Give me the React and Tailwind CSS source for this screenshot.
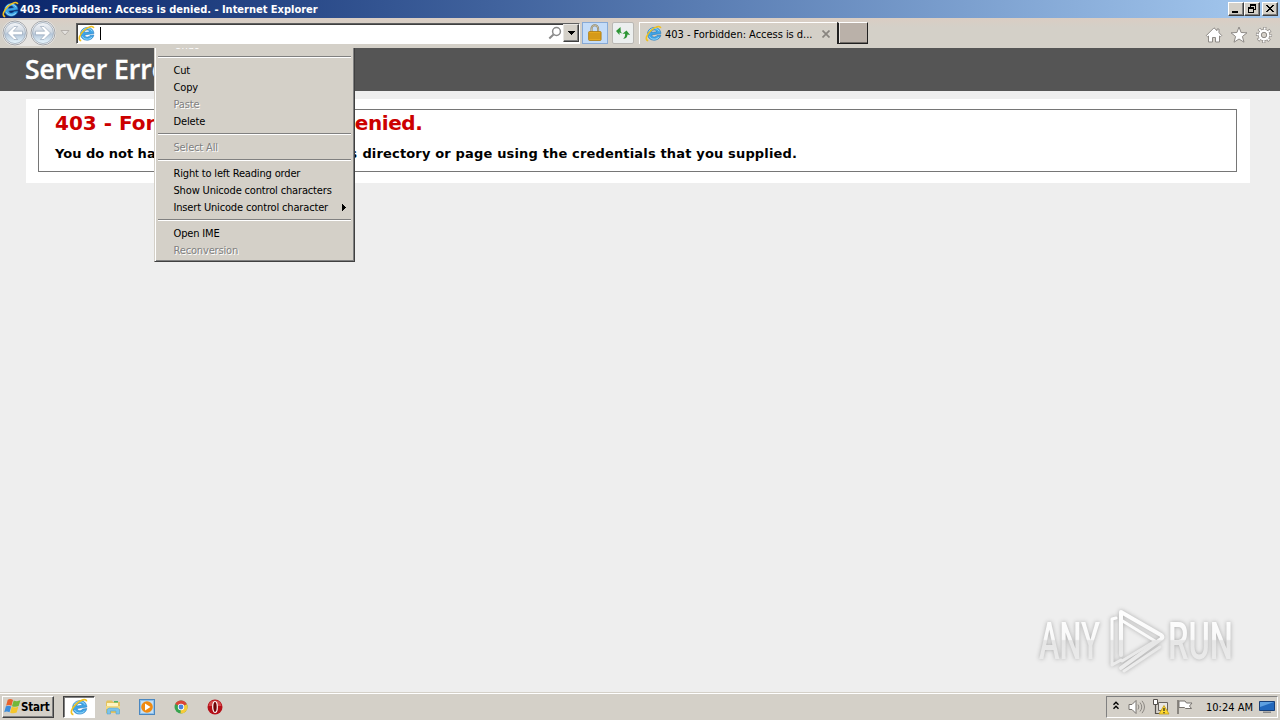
import React from "react";

const ui = "font-['DejaVu_Sans_Condensed','DejaVu_Sans',sans-serif] [font-stretch:condensed]";
const verdana = "font-['DejaVu_Sans',sans-serif]";

function IE({ className }) {
  return (
    <svg viewBox="0 0 18 18" className={className}>
      <path transform="rotate(-8 9 9)" d="M16.800 10.200H6.900c.2 1.700 1.300 2.600 2.900 2.600 1.200 0 2-.4 2.500-1.200h4.200c-.9 2.900-3.400 4.600-6.700 4.600-4.300 0-7.200-2.700-7.200-6.700s3-6.800 7.200-6.800c4.500 0 7.200 2.900 7 7.500zM12.500 7.700C12.300 6.300 11.300 5.500 9.800 5.500S7.200 6.300 6.900 7.700z" fill="#3fa4e6" stroke="#1a72b8" strokeWidth=".5" />
      <path d="M4 7.200C5 4.600 7.200 3.700 9.800 3.700c2.500 0 4.400 1 5.200 3M4.500 12c1.200 2.200 3 3 5.300 3 2.200 0 3.800-.8 4.900-2.300" fill="none" stroke="#9fdefc" strokeWidth="1" />
      <path d="M3.400 16.600C-.5 15.800 1.600 10.200 6.300 5.800c4.300-4 9.800-5.800 10.300-2.500" fill="none" stroke="#f0c020" strokeWidth="1.700" />
    </svg>
  );
}

function NavButton({ flip }) {
  return (
    <svg viewBox="0 0 26 26" className={flip ? "h-[26px] w-[26px] shrink-0 -scale-x-100" : "h-[26px] w-[26px] shrink-0"}>
      <defs>
        <linearGradient id="nav" x1="0" y1="0" x2="0" y2="1">
          <stop offset="0" stopColor="#f4f6f9" />
          <stop offset=".45" stopColor="#cfd8e2" />
          <stop offset=".55" stopColor="#b4c5d8" />
          <stop offset="1" stopColor="#e9f8ff" />
        </linearGradient>
      </defs>
      <circle cx="13" cy="13" r="12" fill="#f3f5f7" stroke="#a4a6aa" />
      <circle cx="13" cy="13" r="10.500" fill="url(#nav)" stroke="#9aa8b8" strokeWidth=".8" />
      <path d="M5.500 13l6.500-6.500h3.600L11.300 11.200H20.500v3.600h-9.200l4.300 4.700H12z" fill="#fff" stroke="#8fa0b3" strokeWidth=".6" />
    </svg>
  );
}

function WinButton({ children, className = "" }) {
  return (
    <div className={"flex h-[14px] w-4 items-center justify-center border border-t-white border-l-white border-r-[#404040] border-b-[#404040] bg-[#d4d0c8] shadow-[inset_-1px_-1px_0_#808080] " + className}>
      <svg viewBox="0 0 12 10" className="h-[10px] w-3 shrink-0" shapeRendering="crispEdges">{children}</svg>
    </div>
  );
}

function TitleBar() {
  return (
    <div className="flex h-[18px] shrink-0 items-center bg-linear-to-r from-[#0a246a] to-[#a6caf0] pl-[2px] pr-[2px]">
      <IE className="h-[17px] w-[17px] shrink-0" />
      <span className={ui + " mt-[1px] ml-[1px] text-[11px] leading-[14px] font-bold whitespace-nowrap text-white tracking-[-0.01px]"}>
        403 - Forbidden: Access is denied. - Internet Explorer
      </span>
      <div className="ml-auto flex">
        <WinButton><path d="M2 7h6v2H2z" /></WinButton>
        <WinButton>
          <path d="M4 0h6v6H8V5h1V2H5v1H4zM2 3h6v6H2zM3 5v3h4V5z" fillRule="evenodd" />
        </WinButton>
        <WinButton className="ml-[2px]">
          <path d="M2 1h2v1h1v1h2V2h1V1h2v1H9v1H8v1H7v1h1v1h1v1h1v1H8V7H7V6H5v1H4v1H2V7h1V6h1V5h1V4H4V3H3V2H2z" />
        </WinButton>
      </div>
    </div>
  );
}

function Toolbar() {
  return (
    <div className="flex h-[30px] shrink-0 items-center bg-linear-to-b from-[#dacdc3] to-[#d4d0c8] to-30% pl-[2px]">
      <div className="flex h-[26px] gap-[2px] rounded-full bg-[#e6e4e1]">
        <NavButton />
        <NavButton flip />
      </div>
      <svg viewBox="0 0 10 8" className="ml-[4px] h-2 w-[10px] shrink-0">
        <path d="M1 1.500h8L5 6z" fill="#e4e2df" stroke="#aaa59f" strokeWidth=".8" />
      </svg>
      <div className="ml-[6px] flex h-[21px] w-[504px] shrink-0 items-center border border-t-[#606060] border-l-[#606060] border-r-white border-b-white bg-white pl-[1px] shadow-[inset_1px_1px_0_#404040]">
        <IE className="h-[17px] w-[17px] shrink-0" />
        <div className="ml-[5px] h-[13px] w-px bg-black" />
        <svg viewBox="0 0 14 14" className="ml-auto h-[14px] w-[14px] shrink-0">
          <circle cx="8.500" cy="5.500" r="3.900" fill="none" stroke="#8a8a8a" strokeWidth="1.500" />
          <path d="M5.500 8.500L1.300 12.500" stroke="#8a8a8a" strokeWidth="2" />
        </svg>
        <div className="ml-[1px] flex h-[18px] w-4 items-center justify-center border border-t-[#e8e6e2] border-l-[#e8e6e2] border-r-[#404040] border-b-[#404040] bg-[#d4d0c8] shadow-[inset_-1px_-1px_0_#808080]">
          <svg viewBox="0 0 7 4" className="h-1 w-[7px]" shapeRendering="crispEdges"><path d="M0 0h7v1H6v1H5v1H4v1H3V3H2V2H1V1H0z" /></svg>
        </div>
      </div>
      <div className="ml-[2px] flex h-[22px] w-[26px] shrink-0 items-center justify-center border border-[#88aad6] bg-[#c4dcf8]">
        <svg viewBox="0 0 14 18" className="h-[18px] w-[14px]">
          <path d="M3.500 8V4.500a3.300 3.300 0 0 1 6.600 0V8" fill="none" stroke="#8c8062" strokeWidth="2" />
          <path d="M3.500 8V4.500a3.300 3.300 0 0 1 6.600 0V8" fill="none" stroke="#ddd4b8" strokeWidth=".7" />
          <rect x=".6" y="7.500" width="12.500" height="9" rx="1" fill="#e6a91f" stroke="#a87812" strokeWidth=".8" />
          <path d="M1 10h12M1 12h12M1 14h12" stroke="#b87f10" strokeWidth=".7" />
        </svg>
      </div>
      <div className="ml-1 flex h-[22px] w-[22px] shrink-0 items-center justify-center rounded-[2px] border border-[#bab8b4] bg-[#ecefef]">
        <svg viewBox="0 0 16 16" className="h-4 w-4">
          <path d="M5.500 2L1 6l3.500 4V7.300C5.500 8.300 6.500 8.500 7.500 8.300C6 7.500 5.500 6.500 5.700 5z" fill="#2e9636" />
          <path d="M11.500 5.500L7.500 8.700h2.600c.1 2.300-.5 3.900-2 5c2.800 0 4.300-1.600 4.400-4.300l2.600.6z" fill="#2e9636" />
        </svg>
      </div>
      <div className="ml-[5px] flex h-[22px] w-[198px] shrink-0 items-center border-t border-l border-white pl-[5px]">
        <IE className="h-[17px] w-[17px] shrink-0" />
        <span className={ui + " mt-[2px] ml-[3px] w-[149px] text-[11px] leading-[14px] whitespace-nowrap text-black tracking-[-0.03px]"}>
          403 - Forbidden: Access is d...
        </span>
        <svg viewBox="0 0 8 8" className="mt-[1px] ml-[8px] h-2 w-2 shrink-0"><path d="M.5.5l7 7M7.500.5l-7 7" stroke="#88847f" strokeWidth="1.700" /></svg>
      </div>
      <div className="h-[22px] w-[31px] shrink-0 border-r border-b border-l-2 border-t border-[#202020] border-t-white bg-[#bab1a9] shadow-[inset_1px_0_0_#e8e4e0,inset_0_-1px_0_#706b66]" />
      <div className="mr-[7px] ml-auto flex items-center gap-[7px] pt-[3px]">
        <svg viewBox="0 0 18 18" className="h-[18px] w-[18px]">
          <path d="M9 1.800L12 4.700V3h2v3.700l2.700 2.800-1.200 1.200L14.500 10v6h-4v-4.500h-3V16h-4v-6l-1 .7L1.300 9.500z" fill="#fff" stroke="#8e8a86" strokeWidth="1" />
        </svg>
        <svg viewBox="0 0 18 18" className="h-[18px] w-[18px]">
          <path d="M9 1l2.100 5.500 5.900.3-4.600 3.700 1.600 5.700L9 13l-5 3.200 1.600-5.700L1 6.800l5.900-.3z" fill="#fff" stroke="#8e8a86" strokeWidth="1" />
        </svg>
        <svg viewBox="0 0 18 18" className="h-[18px] w-[18px]">
          <circle cx="9" cy="9" r="6.400" fill="none" stroke="#8e8a86" strokeWidth="3.400" strokeDasharray="2.900 2.126" strokeDashoffset="1.450" />
          <circle cx="9" cy="9" r="5.800" fill="#fff" stroke="#8e8a86" strokeWidth=".8" />
          <circle cx="9" cy="9" r="6.400" fill="none" stroke="#fff" strokeWidth="2.200" strokeDasharray="1.700 3.326" strokeDashoffset=".85" />
          <circle cx="9" cy="9" r="2.700" fill="#d4d0c8" stroke="#8e8a86" />
        </svg>
      </div>
    </div>
  );
}

const menuItems = [
  { label: "Undo", off: true },
  null,
  { label: "Cut" },
  { label: "Copy" },
  { label: "Paste", off: true },
  { label: "Delete" },
  null,
  { label: "Select All", off: true },
  null,
  { label: "Right to left Reading order" },
  { label: "Show Unicode control characters" },
  { label: "Insert Unicode control character", sub: true },
  null,
  { label: "Open IME" },
  { label: "Reconversion", off: true },
];

function ContextMenu() {
  return (
    <div className="absolute top-0 left-[154px] flex h-[214px] w-[201px] flex-col justify-end overflow-hidden border-r border-b border-l border-r-[#404040] border-b-[#404040] border-l-[#d4d0c8] bg-[#d4d0c8] shadow-[inset_1px_0_0_#fff,inset_-1px_-1px_0_#808080]">
      <div className="flex flex-col px-[3px] pb-[2px]">
        {menuItems.map((item, i) =>
          item ? (
            <div key={i} className="flex h-[17px] shrink-0 items-center pr-[5px] pl-[15.500px]">
              <span className={ui + " text-[11px] leading-[14px] whitespace-nowrap tracking-[-0.16px] " + (item.off ? "text-[#808080] [text-shadow:1px_1px_0_#fff]" : "text-black")}>
                {item.label}
              </span>
              {item.sub && (
                <svg viewBox="0 0 4 7" className="ml-auto h-[7px] w-1" shapeRendering="crispEdges"><path d="M0 0h1v1h1v1h1v1h1v1H3v1H2v1H1v1H0z" /></svg>
              )}
            </div>
          ) : (
            <div key={i} className="flex h-[9px] shrink-0 items-start pt-[3px]">
              <div className="h-[2px] w-full border-t border-b border-t-[#808080] border-b-white" />
            </div>
          )
        )}
      </div>
    </div>
  );
}

function Watermark() {
  return (
    <svg viewBox="0 0 200 70" className="absolute right-[43px] bottom-[17px] h-[70px] w-[200px] drop-shadow-[0_0_2px_#aaaaaa]">
      <defs>
        <linearGradient id="wm" gradientUnits="userSpaceOnUse" x1="0" y1="0" x2="0" y2="70">
          <stop offset="0" stopColor="#fff" />
          <stop offset=".49" stopColor="#f9f9f9" />
          <stop offset=".51" stopColor="#e6e6e6" />
          <stop offset="1" stopColor="#eee" />
        </linearGradient>
      </defs>
      <g fill="none" stroke="url(#wm)" strokeWidth="4" strokeLinejoin="round" strokeLinecap="round">
        <path d="M84 50V7l40 23q3 2 0 4L84 63" />
        <path d="M79 13l-4 1v46l9-5M84 15l34 21-33 20M87 66l36-24" strokeWidth="3" />
      </g>
      <g fill="url(#wm)" className="font-['Roboto',sans-serif] text-[51px] font-medium">
        <text x="2" y="54" textLength="61" lengthAdjust="spacingAndGlyphs">ANY</text>
        <text x="131" y="54" textLength="65" lengthAdjust="spacingAndGlyphs">RUN</text>
      </g>
    </svg>
  );
}

function Page() {
  return (
    <div className="relative flex min-h-0 flex-1 flex-col bg-[#eeeeee]">
      <div className="flex h-[43px] shrink-0 items-center bg-[#555555] pl-[25px]">
        <h1 className="-mt-[2px] font-['Open_Sans',sans-serif] text-[26.500px] leading-[40px] font-semibold text-white [-webkit-text-stroke:0.4px_white]">Server Error</h1>
      </div>
      <div className="mt-2 ml-[26px] h-[84px] w-[1224px] bg-white pt-[10px] pl-3">
        <div className="h-[63px] w-[1199px] border border-[#767676] pl-4">
          <h2 className={verdana + " mt-[1px] text-[20px] leading-6 font-bold whitespace-nowrap text-[#cc0000]"}>
            403 - For<span className="tracking-[-0.880px]">bidden: Access is d</span><span className="tracking-[-0.450px]">enied.</span>
          </h2>
          <h3 className={verdana + " mt-[10px] pt-[1px] text-[13px] leading-4 font-bold whitespace-nowrap text-black"}>
            You do not have <span className="tracking-[0.400px]">permission to view this </span><span className="tracking-[0.160px]">directory or page using the credentials that you supplied.</span>
          </h3>
        </div>
      </div>
      <ContextMenu />
      <Watermark />
    </div>
  );
}

function Taskbar() {
  return (
    <div className="flex h-[28px] shrink-0 items-center border-t border-[#d4d0c8] bg-[#d4d0c8] pr-[2px] pl-[2px] shadow-[inset_0_1px_0_#fff]">
      <div className="flex h-[22px] w-[52px] shrink-0 items-center border border-t-white border-l-white border-r-[#404040] border-b-[#404040] pl-[1px] shadow-[inset_-1px_-1px_0_#808080]">
        <svg viewBox="0 0 16 16" className="h-[17px] w-[17px] shrink-0">
          <path d="M3.500 1.700C5.500.5 7 1 8.500 1.900L7 7.400C5 6.400 3.700 6.400 2 7.200z" fill="#e8622c" />
          <path d="M9.100 2.300C11 3.200 13.500 3.200 15.500 2.200L13.800 7.600C11.800 8.600 9.500 8.500 7.500 7.700z" fill="#72b83a" />
          <path d="M1.800 7.800C3.500 7 5 7 6.800 7.900L5.200 13.500C3.500 12.500 2 12.500 .2 13.300z" fill="#3c8ddc" />
          <path d="M7.300 8.300C9.300 9.100 11.500 9.200 13.500 8.200L11.900 13.700C9.800 14.700 7.800 14.700 5.800 13.800z" fill="#f5c62c" />
        </svg>
        <span className={ui + " text-[11.500px] leading-[14px] font-bold tracking-[-0.2px] text-black"}>Start</span>
      </div>
      <div className="ml-[9px] flex h-[22px] w-[32px] shrink-0 items-center justify-center border border-t-[#404040] border-l-[#404040] border-r-white border-b-white bg-white shadow-[inset_1px_1px_0_#808080]">
        <IE className="h-[18px] w-[18px]" />
      </div>
      <svg viewBox="0 0 16 16" className="ml-[10px] h-4 w-4 shrink-0">
        <path d="M1 3l1-1.500h5l1 1.500h7v11H1z" fill="#e4c35e" />
        <path d="M2 4h11v5H2z" fill="#fff4c0" />
        <path d="M9 2h4v1.500H9z" fill="#4ab565" />
        <path d="M1 7h14v3H1z" fill="#f3d97f" />
        <path d="M2 15V10.500L4 9h8.500l2 1.500V15H11v-3H5.500v3z" fill="#7cc3ea" stroke="#4a9ccf" strokeWidth=".5" />
      </svg>
      <svg viewBox="0 0 16 16" className="ml-[18px] h-4 w-4 shrink-0">
        <rect x=".5" y=".5" width="15" height="15" fill="#8ec1ec" stroke="#4a87c0" />
        <rect x="2" y="2" width="12" height="12" fill="#c4dff5" />
        <circle cx="8" cy="8" r="5.800" fill="#f08a10" />
        <path d="M6 4.500L11.500 8L6 11.500z" fill="#fff" />
      </svg>
      <svg viewBox="0 0 16 16" className="ml-[18px] h-4 w-4 shrink-0">
        <circle cx="8" cy="8" r="6.500" fill="#38a34e" />
        <path d="M8 8L2.200 5A6.500 6.500 0 0 1 13.900 5.200z" fill="#dc4437" />
        <path d="M8 8l5.900-2.800A6.500 6.500 0 0 1 7.500 14.500z" fill="#f7cb39" />
        <circle cx="8" cy="8" r="3.200" fill="#fff" />
        <circle cx="8" cy="8" r="2.400" fill="#4a82dc" />
      </svg>
      <svg viewBox="0 0 16 16" className="ml-[18px] h-4 w-4 shrink-0">
        <circle cx="8" cy="8" r="7.500" fill="#b50f18" />
        <path d="M1.500 7a6.600 6.600 0 0 1 13 0z" fill="#d74a4c" />
        <ellipse cx="8" cy="8" rx="2.300" ry="5.500" fill="#700307" stroke="#fff" strokeWidth="1.200" />
      </svg>
      <div className="ml-auto flex h-[22px] w-[172px] shrink-0 items-center border border-t-[#808080] border-l-[#808080] border-r-white border-b-white pl-[6px]">
        <svg viewBox="0 0 6 9" className="-mt-[2px] h-[9px] w-[6px] shrink-0"><path d="M.5 3.700L3 1.200l2.500 2.500M.5 7.700L3 5.200l2.500 2.500" fill="none" stroke="#000" strokeWidth="1.400" /></svg>
        <svg viewBox="0 0 18 16" className="ml-[9px] h-4 w-[18px] shrink-0">
          <path d="M1 5.500h3l4-4v13l-4-4H1z" fill="#fff" stroke="#77736e" />
          <path d="M10 5.500q1.800 2.500 0 5M12 3.500q3.500 4.500 0 9M14 1.800q5 6.200 0 12.400" fill="none" stroke="#8b8782" />
        </svg>
        <svg viewBox="0 0 18 18" className="ml-[6px] h-[18px] w-[18px] shrink-0">
          <path d="M6.500 4.500h9v8h-9z" fill="#e9e7e3" stroke="#68645f" />
          <path d="M1.500 1.500h4v5h-4z" fill="#fff" stroke="#55514d" />
          <path d="M3.500 6.500v9h5" fill="none" stroke="#55514d" strokeWidth="1.200" />
          <path d="M12 7.500l5 8.500H7z" fill="#ffd92e" stroke="#c29a12" strokeWidth=".8" />
          <path d="M12 10v3M12 14v1.200" stroke="#222" strokeWidth="1.200" />
        </svg>
        <svg viewBox="0 0 18 16" className="ml-[6px] h-4 w-[18px] shrink-0">
          <path d="M2 1v14" stroke="#77736e" strokeWidth="1.600" />
          <path d="M3 2h6l1.500 2H16l-2.500 3 2 2.500H9.500L8.500 8.500H3z" fill="#fff" stroke="#77736e" />
        </svg>
        <span className={ui + " mt-[2px] ml-[12px] w-[48px] text-[11px] leading-[14px] whitespace-nowrap text-black"}>10:24 AM</span>
        <svg viewBox="0 0 16 14" className="ml-[5px] h-[14px] w-4 shrink-0">
          <path d="M.5 1.500h15v9H.5z" fill="#2268bc" stroke="#173f78" />
          <path d="M1 2h14L1 7z" fill="#5ea0e0" />
          <path d="M4 11.500h8v1.500H4z" fill="#888" />
        </svg>
      </div>
    </div>
  );
}

export default function App() {
  return (
    <div className="flex h-[720px] w-[1280px] flex-col overflow-hidden bg-[#d4d0c8]">
      <TitleBar />
      <Toolbar />
      <Page />
      <Taskbar />
    </div>
  );
}
